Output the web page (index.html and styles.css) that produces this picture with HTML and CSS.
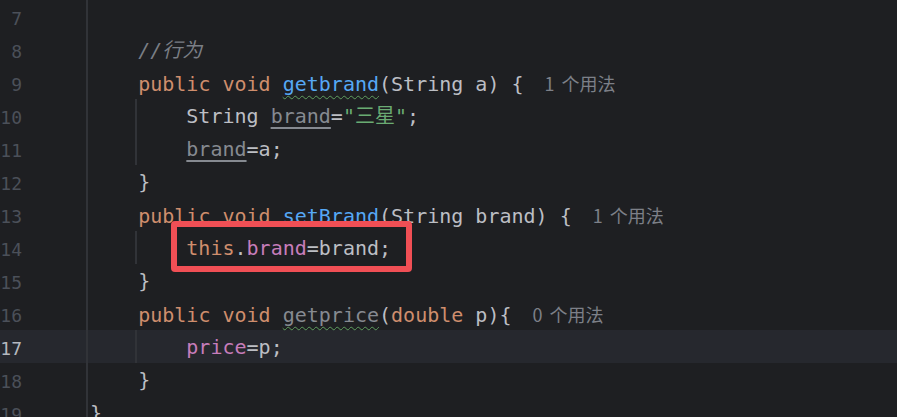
FILE: index.html
```html
<!DOCTYPE html>
<html lang="zh">
<head>
<meta charset="utf-8">
<title>Editor</title>
<link rel="stylesheet" href="styles.css">
</head>
<body>
<div class="editor">
  <div class="row"><div class="ln">7</div><div class="code"></div></div>
  <div class="row"><div class="ln">8</div><div class="code">    <span class="cm">//行为</span></div></div>
  <div class="row"><div class="ln">9</div><div class="code">    <span class="kw">public</span> <span class="kw">void</span> <span class="fn typo">getbrand</span>(String a) {<span class="hint">1 个用法</span></div></div>
  <div class="row"><div class="ln">10</div><div class="code g1">        String <span class="unused">brand</span>=<span class="str">"三星"</span>;</div></div>
  <div class="row"><div class="ln">11</div><div class="code g1">        <span class="unused">brand</span>=a;</div></div>
  <div class="row"><div class="ln">12</div><div class="code">    }</div></div>
  <div class="row"><div class="ln">13</div><div class="code">    <span class="kw">public</span> <span class="kw">void</span> <span class="fn">setBrand</span>(String brand) {<span class="hint">1 个用法</span></div></div>
  <div class="row"><div class="ln">14</div><div class="code g1">        <span class="kw">this</span>.<span class="field">brand</span>=brand;</div></div>
  <div class="row"><div class="ln">15</div><div class="code">    }</div></div>
  <div class="row"><div class="ln">16</div><div class="code">    <span class="kw">public</span> <span class="kw">void</span> <span class="gray typo">getprice</span>(<span class="kw">double</span> p){<span class="hint">0 个用法</span></div></div>
  <div class="row current"><div class="ln">17</div><div class="code g1">        <span class="field">price</span>=p;</div></div>
  <div class="row"><div class="ln">18</div><div class="code">    }</div></div>
  <div class="row"><div class="ln">19</div><div class="code">}</div></div>
  <div class="mark"></div>
</div>
</body>
</html>
```

FILE: styles.css
```css
html, body {
  margin: 0;
  padding: 0;
  background: #1e1f22;
  overflow: hidden;
}

.editor {
  position: relative;
  width: 897px;
  height: 417px;
  overflow: hidden;
  background: #1e1f22;
}

.row {
  display: flex;
  height: 33px;
}

.row.current {
  background: #26282e;
}

.ln {
  width: 86px;
  flex: none;
  box-sizing: border-box;
  height: 33px;
  padding: 4px 64px 0 0;
  line-height: 29px;
  text-align: right;
  font-family: "DejaVu Sans Mono", monospace;
  font-size: 18px;
  color: #4b5059;
}

.current .ln {
  color: #b4b8bf;
}

.code {
  flex: 1;
  box-sizing: border-box;
  height: 33px;
  padding: 1px 0 0 2px;
  line-height: 32px;
  border-left: 2px solid #313338;
  white-space: pre;
  font-family: "DejaVu Sans Mono", "Noto Sans CJK SC", monospace;
  font-size: 20px;
  color: #bcbec4;
}

.code.g1 {
  background-image: linear-gradient(#313338, #313338);
  background-repeat: no-repeat;
  background-position: 47px 0;
  background-size: 2px 100%;
}

.kw { color: #cf8e6d; }
.fn { color: #56a8f5; }
.field { color: #c77dbb; }
.str { color: #6aab73; }
.gray { color: #868a91; }

.cm {
  color: #7a7e85;
  font-style: italic;
}

.unused {
  color: #868a91;
  text-decoration: underline;
  text-decoration-color: #868a91;
  text-underline-offset: 4px;
}

.typo {
  text-decoration: underline wavy #5f9e5f;
  text-decoration-thickness: 1px;
  text-underline-offset: 4px;
}

.hint {
  margin-left: 21px;
  font-family: "Noto Sans CJK SC", "Noto Sans", sans-serif;
  font-size: 18px;
  word-spacing: 3px;
  color: #7d8088;
}

.mark {
  position: absolute;
  left: 171px;
  top: 221px;
  width: 241px;
  height: 51px;
  box-sizing: border-box;
  border: 6px solid #f04f55;
  border-radius: 4px;
}
```
